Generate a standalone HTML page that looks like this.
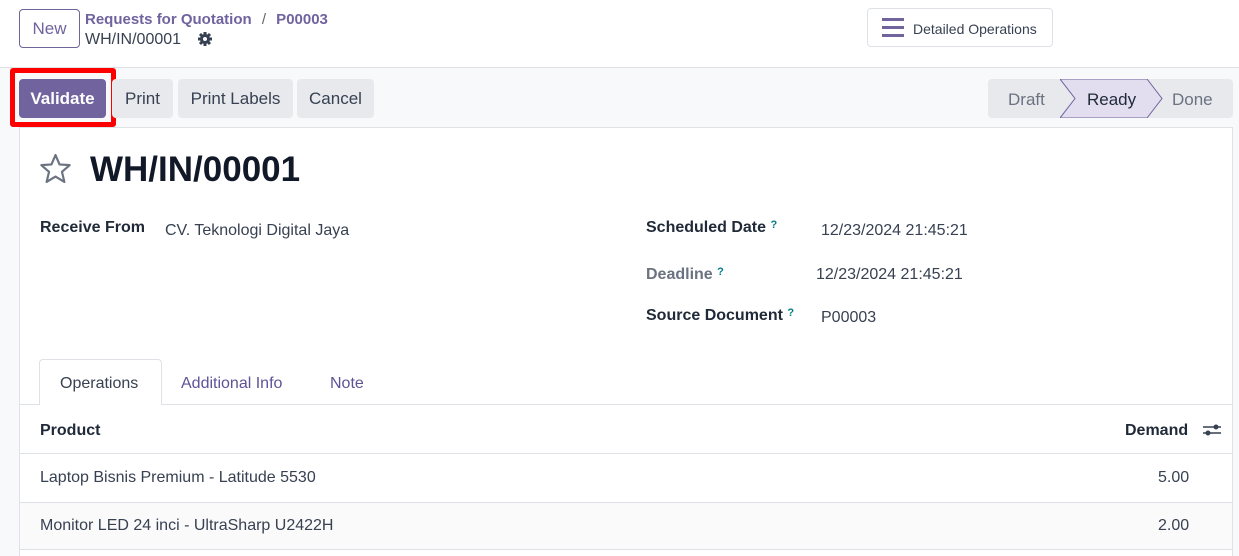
<!DOCTYPE html>
<html><head><meta charset="utf-8"><style>
*{box-sizing:border-box;margin:0;padding:0}
html,body{width:1239px;height:556px;overflow:hidden}
body{background:#f8f9fa;font-family:"Liberation Sans",sans-serif;color:#374151;font-size:16px;position:relative}
.abs{position:absolute;white-space:nowrap}
.top{position:absolute;left:0;top:0;width:1239px;height:68px;background:#fff;border-bottom:1px solid #dee2e6}
.btn{position:absolute;height:39px;border-radius:4px;background:#e7e9ed;color:#374151;font-size:17px;line-height:40px;text-align:center}
.sheet{position:absolute;left:19px;top:127px;width:1214px;height:440px;background:#fff;border:1px solid #dee2e6}
.lbl{font-weight:bold;color:#1f2937}
.q{font-size:11px;color:#017e84;vertical-align:top;font-weight:bold}
</style></head><body>
<div class="top"></div>
<div class="abs" style="left:19px;top:9px;width:61px;height:39px;border:1px solid #71639e;border-radius:4px;color:#71639e;font-size:17px;line-height:38px;text-align:center">New</div>
<div class="abs" style="left:85px;top:11px;color:#71639e;font-weight:bold;font-size:15px">Requests for Quotation <span style="font-weight:normal;color:#666;margin:0 6px">/</span> P00003</div>
<div class="abs" style="left:85px;top:31px;color:#374151;font-size:16px">WH/IN/00001</div>
<svg class="abs" style="left:197px;top:31px" width="16" height="16" viewBox="0 0 16 16"><circle cx="8" cy="8" r="5" fill="#374151"/><g stroke="#374151" stroke-width="3"><line x1="8" y1="1" x2="8" y2="15"/><line x1="1" y1="8" x2="15" y2="8"/><line x1="3" y1="3" x2="13" y2="13"/><line x1="13" y1="3" x2="3" y2="13"/></g><circle cx="8" cy="8" r="2" fill="#fff"/></svg>
<div class="abs" style="left:867px;top:8px;width:186px;height:39px;border:1px solid #dee2e6;border-radius:4px;background:#fff"></div>
<svg class="abs" style="left:882px;top:18px" width="22" height="19"><rect y="0" width="22" height="3" fill="#71639e"/><rect y="8" width="22" height="3" fill="#71639e"/><rect y="16" width="22" height="3" fill="#71639e"/></svg>
<div class="abs" style="left:913px;top:21px;font-size:14px;color:#374151">Detailed Operations</div>
<div class="abs" style="left:10px;top:68px;width:106px;height:59px;border:5px solid #f00;border-radius:3px"></div>
<div class="btn" style="left:19px;top:79px;width:87px;background:#71639e;color:#fff;font-weight:bold">Validate</div>
<div class="btn" style="left:112px;top:79px;width:61px">Print</div>
<div class="btn" style="left:178px;top:79px;width:115px">Print Labels</div>
<div class="btn" style="left:297px;top:79px;width:77px">Cancel</div>
<div class="abs" style="left:988px;top:79px;width:245px;height:39px;background:#e7e9ed;border-radius:4px"></div>
<svg class="abs" style="left:1060px;top:79px" width="104" height="39"><polygon points="0,0 87,0 102,19.5 87,39 0,39 15,19.5" fill="#e2def0" stroke="#71639e" stroke-width="1"/></svg>
<div class="abs" style="left:1008px;top:90px;font-size:17px;color:#6b7280">Draft</div>
<div class="abs" style="left:1087px;top:90px;font-size:17px;color:#1f2937">Ready</div>
<div class="abs" style="left:1172px;top:90px;font-size:17px;color:#6b7280">Done</div>
<div class="sheet"></div>
<svg class="abs" style="left:39px;top:153px" width="33" height="31" viewBox="0 0 24 23"><polygon points="12,1.5 15,8.5 22.5,9 16.8,14 18.6,21.5 12,17.5 5.4,21.5 7.2,14 1.5,9 9,8.5" fill="none" stroke="#6b7280" stroke-width="1.6" stroke-linejoin="round"/></svg>
<div class="abs" style="left:90px;top:150px;font-size:35px;font-weight:bold;color:#111827">WH/IN/00001</div>
<div class="abs lbl" style="left:40px;top:219px">Receive From</div>
<div class="abs" style="left:165px;top:222px">CV. Teknologi Digital Jaya</div>
<div class="abs lbl" style="left:646px;top:219px">Scheduled Date <span class="q">?</span></div>
<div class="abs" style="left:821px;top:222px">12/23/2024 21:45:21</div>
<div class="abs" style="left:646px;top:266px;color:#6b7280;font-weight:bold">Deadline <span class="q">?</span></div>
<div class="abs" style="left:816px;top:266px">12/23/2024 21:45:21</div>
<div class="abs lbl" style="left:646px;top:307px">Source Document <span class="q">?</span></div>
<div class="abs" style="left:821px;top:309px">P00003</div>
<div class="abs" style="left:20px;top:404px;width:1212px;border-top:1px solid #dee2e6"></div>
<div class="abs" style="left:39px;top:359px;width:123px;height:46px;background:#fff;border:1px solid #dee2e6;border-bottom:none;border-radius:4px 4px 0 0"></div>
<div class="abs" style="left:60px;top:375px">Operations</div>
<div class="abs" style="left:181px;top:375px;color:#5f5396">Additional Info</div>
<div class="abs" style="left:330px;top:375px;color:#5f5396">Note</div>
<div class="abs lbl" style="left:40px;top:422px">Product</div>
<div class="abs lbl" style="left:1125px;top:422px">Demand</div>
<svg class="abs" style="left:1203px;top:422px" width="18" height="16"><line x1="0" y1="5" x2="18" y2="5" stroke="#374151" stroke-width="1.5"/><line x1="0" y1="11" x2="18" y2="11" stroke="#374151" stroke-width="1.5"/><circle cx="13" cy="5" r="2.5" fill="#374151"/><circle cx="5" cy="11" r="2.5" fill="#374151"/></svg>
<div class="abs" style="left:20px;top:453px;width:1212px;border-top:1px solid #dee2e6"></div>
<div class="abs" style="left:40px;top:469px">Laptop Bisnis Premium - Latitude 5530</div>
<div class="abs" style="left:1158px;top:469px">5.00</div>
<div class="abs" style="left:20px;top:502px;width:1212px;height:48px;background:#fafafb;border-top:1px solid #dee2e6;border-bottom:1px solid #dee2e6"></div>
<div class="abs" style="left:40px;top:517px">Monitor LED 24 inci - UltraSharp U2422H</div>
<div class="abs" style="left:1158px;top:517px">2.00</div>
</body></html>
